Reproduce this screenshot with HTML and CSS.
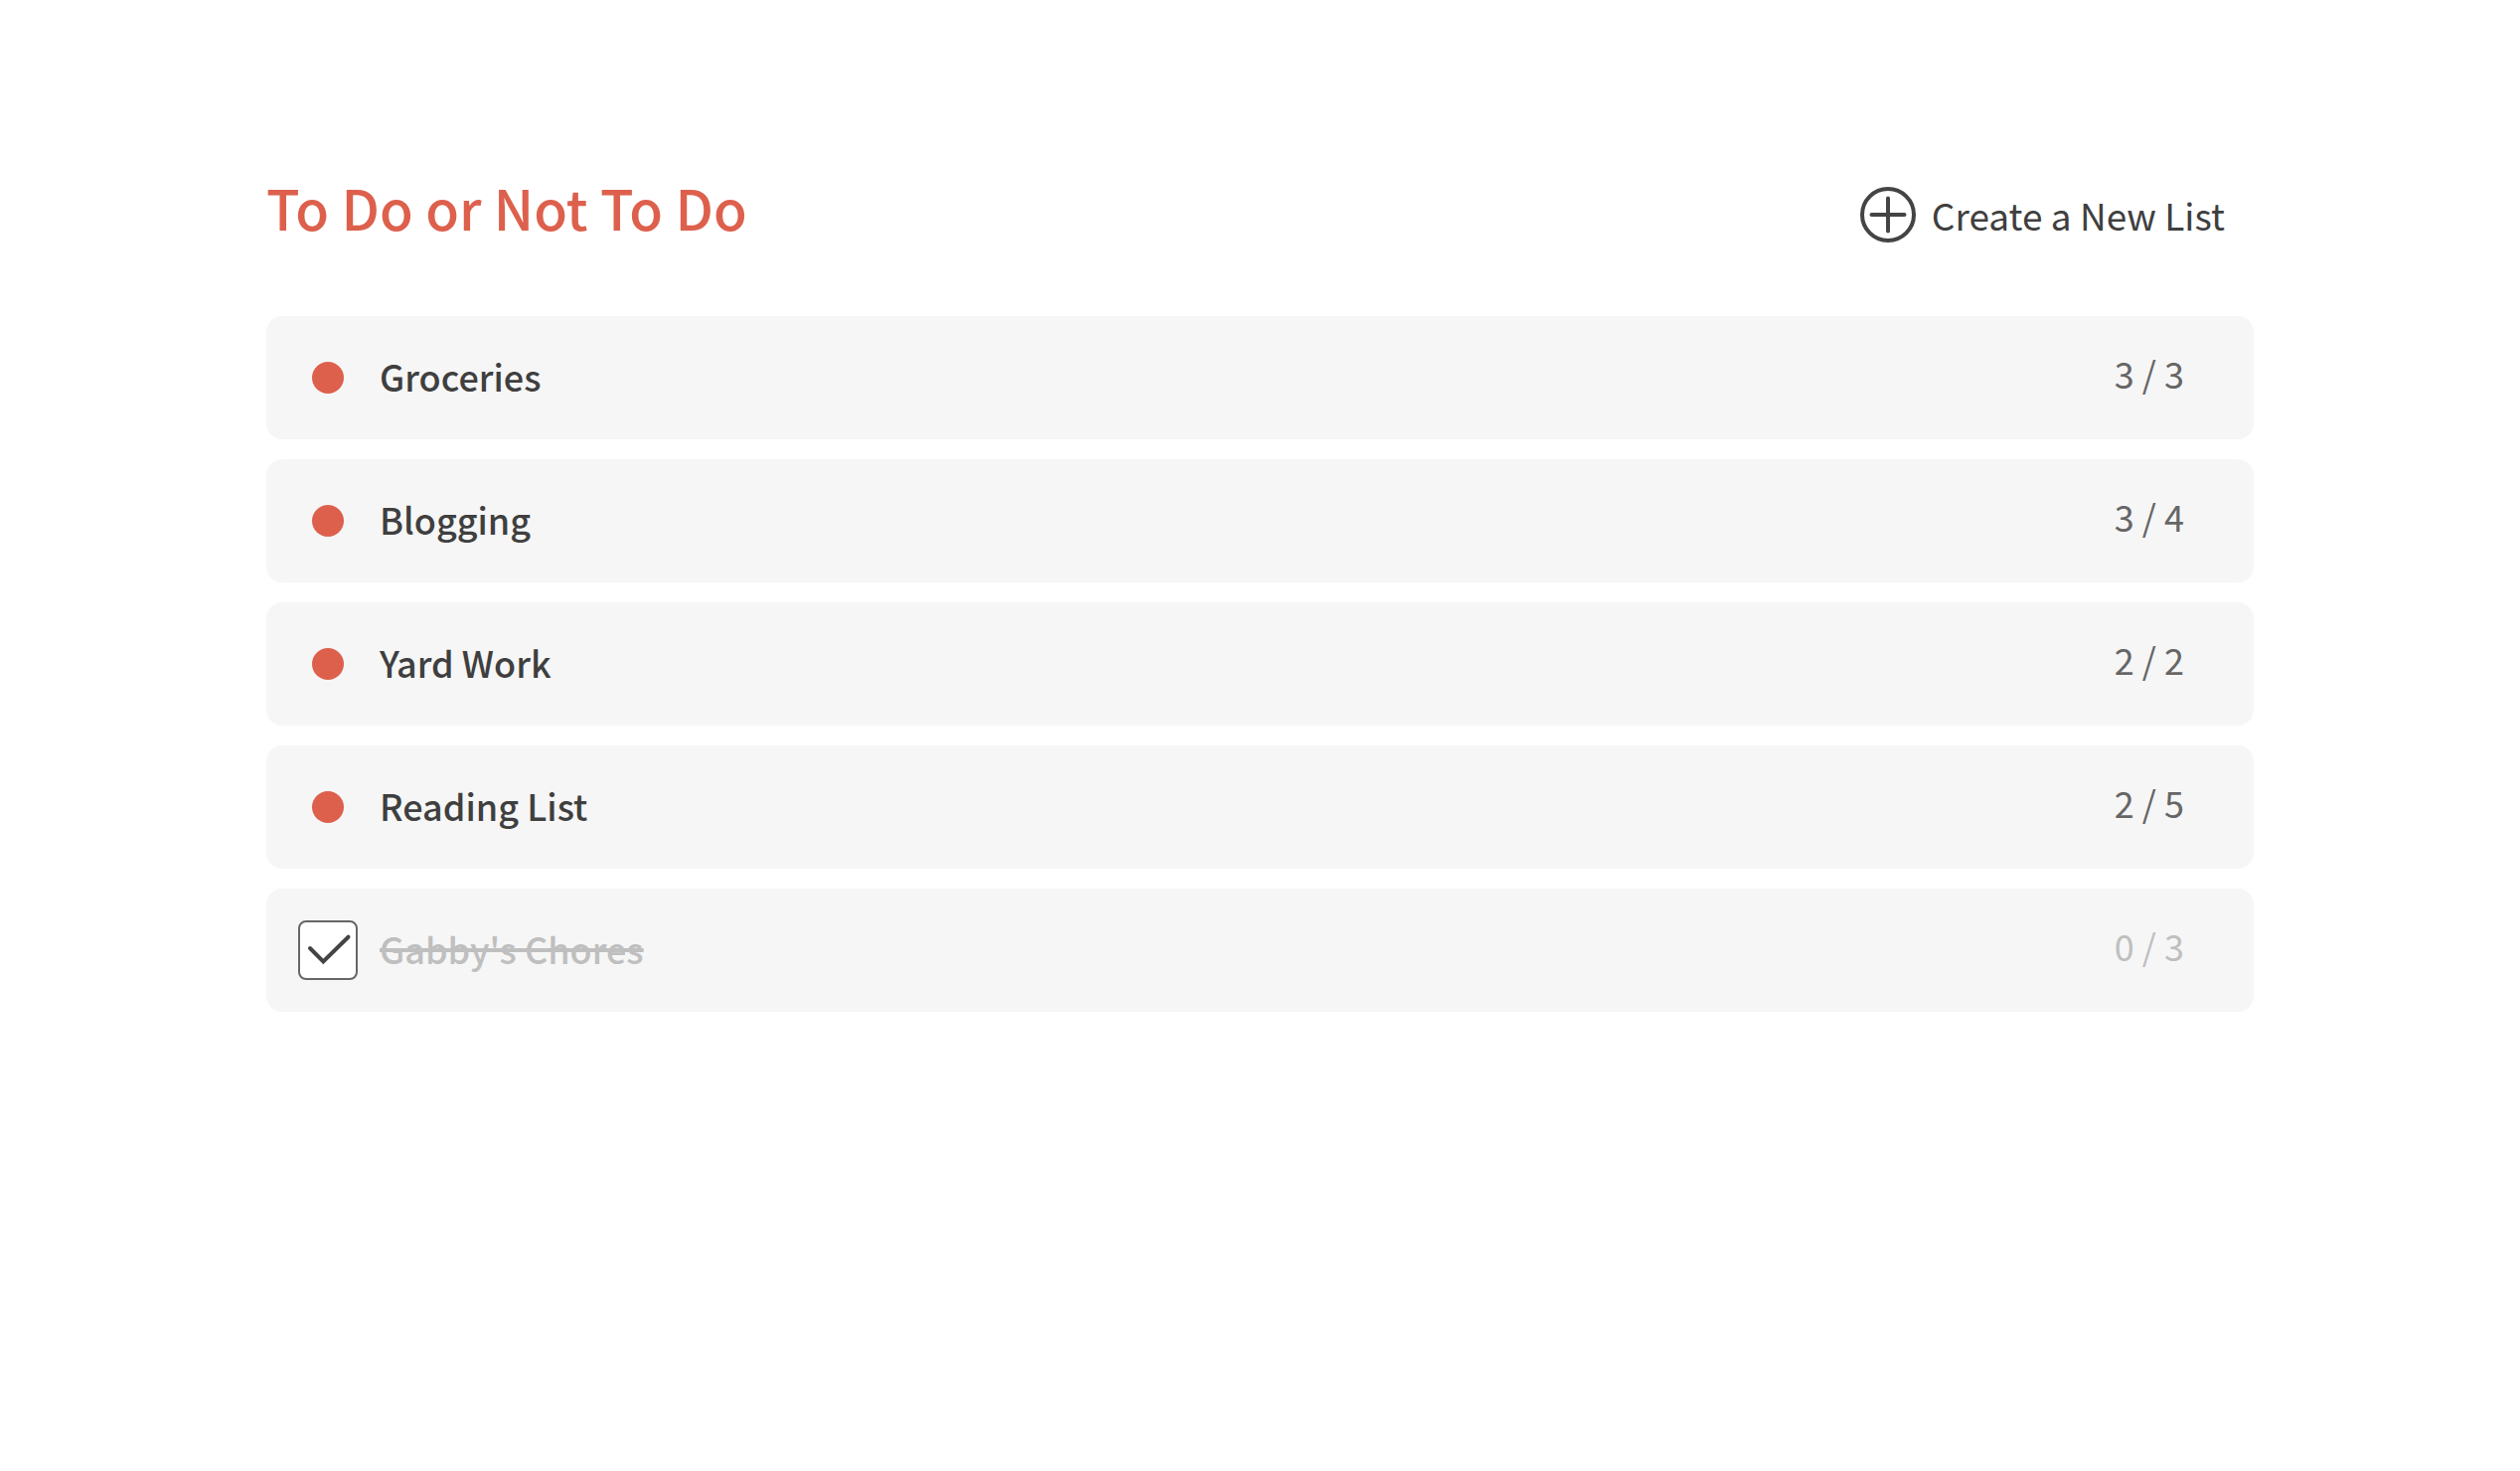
FILE: index.html
```html
<!DOCTYPE html>
<html lang="en">
<head>
<meta charset="utf-8">
<title>To Do or Not To Do</title>
<link rel="stylesheet" href="styles.css">
</head>
<body>
<main class="page">
  <header class="header">
    <h1 class="title">To Do or Not To Do</h1>
    <button class="create" type="button">
      <svg class="create-icon" viewBox="0 0 56 56" aria-hidden="true"><circle cx="28" cy="28" r="26"/><path d="M28 11.500v33M11.500 28h33"/></svg>
      <span>Create a New List</span>
    </button>
  </header>
  <ul class="lists">
    <li class="list"><span class="marker"><span class="dot"></span></span><a class="name" href="#groceries">Groceries</a><span class="count">3 / 3</span></li>
    <li class="list"><span class="marker"><span class="dot"></span></span><a class="name" href="#blogging">Blogging</a><span class="count">3 / 4</span></li>
    <li class="list"><span class="marker"><span class="dot"></span></span><a class="name" href="#yard-work">Yard Work</a><span class="count">2 / 2</span></li>
    <li class="list"><span class="marker"><span class="dot"></span></span><a class="name" href="#reading-list">Reading List</a><span class="count">2 / 5</span></li>
    <li class="list done">
      <span class="marker">
        <input class="check" type="checkbox" id="chores" checked>
        <svg class="tick" viewBox="0 0 60 60" aria-hidden="true"><path d="M12 28L25.300 41.500L50.500 16.700"/></svg>
      </span>
      <label class="name" for="chores">Gabby's Chores</label>
      <span class="count">0 / 3</span>
    </li>
  </ul>
</main>
</body>
</html>
```
FILE: styles.css
```css
* { box-sizing: border-box; }

body {
  margin: 0;
  background: #fff;
  color: #3f3f3f;
  font-family: "Noto Sans CJK SC", "Noto Sans", sans-serif;
  font-size: 36px;
}

.page { padding: 188px 268px; }

.header {
  display: flex;
  justify-content: space-between;
  align-items: flex-start;
  margin-bottom: 74px;
  padding-right: 29px;
}

.title {
  margin: 0;
  color: #dd604d;
  font-size: 55px;
  font-weight: 500;
  line-height: 40px;
}

.create {
  display: flex;
  align-items: center;
  gap: 16px;
  padding: 0;
  border: 0;
  background: none;
  color: inherit;
  font-family: inherit;
  font-size: 37px;
  line-height: 56px;
  cursor: pointer;
}

.create-icon {
  width: 56px;
  height: 56px;
  fill: none;
  stroke: #444;
  stroke-width: 4;
  stroke-linecap: round;
}

.lists {
  display: grid;
  gap: 20px;
  margin: 0;
  padding: 0;
  list-style: none;
}

.list {
  display: flex;
  align-items: center;
  gap: 22px;
  padding: 32px 70px 32px 32px;
  border-radius: 16px;
  background: #f6f6f6;
  line-height: 48px;
}

.marker {
  display: grid;
  place-items: center;
  width: 60px;
  height: 60px;
}

.dot {
  width: 32px;
  height: 32px;
  border-radius: 50%;
  background: #dd604d;
}

.check,
.tick {
  grid-area: 1 / 1;
  width: 60px;
  height: 60px;
}

.check {
  margin: 0;
  appearance: none;
  border: 2px solid #666;
  border-radius: 8px;
  background: #fff;
}

.tick {
  fill: none;
  stroke: #444;
  stroke-width: 4;
  stroke-linecap: round;
  pointer-events: none;
}

.name {
  flex: 1;
  padding-bottom: 4px;
  color: inherit;
  font-weight: 500;
  text-decoration: none;
}

.count {
  padding-bottom: 10px;
  color: #666;
}

.done .name,
.done .count { color: #bfbfbf; }

.done .name { text-decoration: line-through 4px; }
```
